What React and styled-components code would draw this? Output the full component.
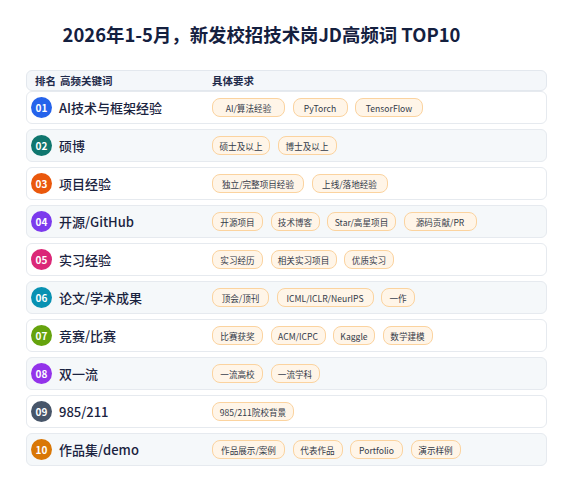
import React from 'react';
import styled, {createGlobalStyle} from 'styled-components';

const GlobalStyle = createGlobalStyle`
	html, body {
		margin: 0;
		padding: 0;
		background: #ffffff;
	}
	body {
		font-family: "Noto Sans CJK SC", "Noto Sans", sans-serif;
		color: #1a2340;
	}
`;

const Page = styled.div`
	width: 569px;
	height: 486px;
	padding: 20px 22px 0 26px;
	box-sizing: border-box;
`;

const Title = styled.h1`
	margin: 0 0 22px 0;
	padding-right: 50px;
	text-align: center;
	font-size: 18.4px;
	line-height: 28px;
	font-weight: 700;
	color: #14203f;
	white-space: nowrap;
`;

const Table = styled.div`
	display: flex;
	flex-direction: column;
	gap: 5px;
`;

const HeaderRow = styled.div`
	display: grid;
	grid-template-columns: 25px 152px 1fr;
	align-items: center;
	height: 21px;
	box-sizing: border-box;
	padding-left: 8px;
	margin-bottom: -5px;
	background: #f4f7fa;
	border: 1px solid #e3e8ee;
	border-radius: 6px;
	font-size: 10.5px;
	font-weight: 700;
	color: #1e2a4a;
`;

const Row = styled.div`
	display: grid;
	grid-template-columns: 28px 153px 1fr;
	align-items: center;
	height: 33px;
	box-sizing: border-box;
	padding-left: 4px;
	background: ${p => p.$alt ? '#f5f8fa' : '#ffffff'};
	border: 1px solid #e6eaef;
	border-radius: 6px;
`;

const Rank = styled.div`
	width: 21px;
	height: 21px;
	border-radius: 50%;
	background: ${p => p.$color};
	color: #fff;
	font-size: 10px;
	font-weight: 700;
	display: flex;
	align-items: center;
	justify-content: center;
`;

const Keyword = styled.div`
	font-size: 13px;
	font-weight: 500;
	color: #1a2340;
	white-space: nowrap;
`;

const Tags = styled.div`
	display: flex;
	gap: 7.5px;
`;

const Tag = styled.span`
	display: inline-flex;
	align-items: center;
	justify-content: center;
	width: ${p => p.$w}px;
	height: 19px;
	box-sizing: border-box;
	background: #fff5e8;
	border: 1px solid #fbd39f;
	border-radius: 8px;
	font-size: 8.6px;
	color: #333a48;
	white-space: nowrap;
`;

const rows = [
	{n: '01', c: '#2563eb', k: 'AI技术与框架经验', t: [['AI/算法经验', 73], ['PyTorch', 55], ['TensorFlow', 68]]},
	{n: '02', c: '#0f766e', k: '硕博', t: [['硕士及以上', 58], ['博士及以上', 59]]},
	{n: '03', c: '#ea580c', k: '项目经验', t: [['独立/完整项目经验', 92], ['上线/落地经验', 76]]},
	{n: '04', c: '#7c3aed', k: '开源/GitHub', t: [['开源项目', 51], ['技术博客', 49], ['Star/高星项目', 69], ['源码贡献/PR', 73]]},
	{n: '05', c: '#db2777', k: '实习经验', t: [['实习经历', 51], ['相关实习项目', 66], ['优质实习', 50]]},
	{n: '06', c: '#0891b2', k: '论文/学术成果', t: [['顶会/顶刊', 57], ['ICML/ICLR/NeurIPS', 97], ['一作', 34]]},
	{n: '07', c: '#65a30d', k: '竞赛/比赛', t: [['比赛获奖', 51], ['ACM/ICPC', 55], ['Kaggle', 42], ['数学建模', 50]]},
	{n: '08', c: '#9333ea', k: '双一流', t: [['一流高校', 51], ['一流学科', 49]]},
	{n: '09', c: '#475569', k: '985/211', t: [['985/211院校背景', 82]]},
	{n: '10', c: '#d97706', k: '作品集/demo', t: [['作品展示/案例', 73], ['代表作品', 50], ['Portfolio', 53], ['演示样例', 50]]},
];

export default function App(){
	return(
		<Page>
			<GlobalStyle/>
			<Title>2026年1-5月，新发校招技术岗JD高频词 TOP10</Title>
			<Table>
				<HeaderRow>
					<span>排名</span>
					<span>高频关键词</span>
					<span>具体要求</span>
				</HeaderRow>
				{rows.map((r, i) =>
					<Row key={r.n} $alt={i % 2 === 1}>
						<Rank $color={r.c}>{r.n}</Rank>
						<Keyword>{r.k}</Keyword>
						<Tags>
							{r.t.map(([label, w]) => <Tag key={label} $w={w}>{label}</Tag>)}
						</Tags>
					</Row>
				)}
			</Table>
		</Page>
	);
}
